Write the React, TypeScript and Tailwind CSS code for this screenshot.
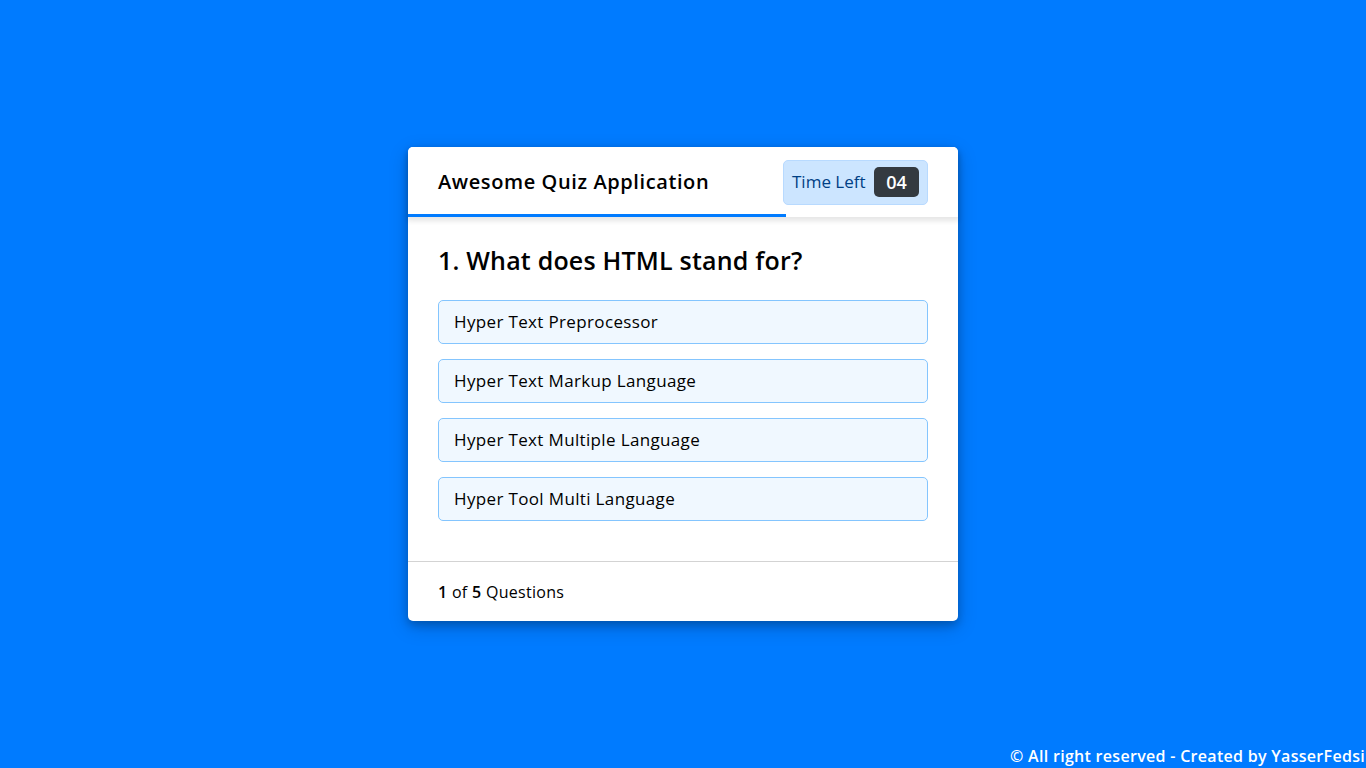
import { useState } from "react";

const questions = [
  {
    numb: 1,
    question: "What does HTML stand for?",
    options: [
      "Hyper Text Preprocessor",
      "Hyper Text Markup Language",
      "Hyper Text Multiple Language",
      "Hyper Tool Multi Language",
    ],
  },
];

const font = { fontFamily: '"Open Sans", "Liberation Sans", sans-serif' };

const App = () => {
  const [index] = useState(0);
  const q = questions[index];
  const timeLeft = 4;
  const total = 5;
  // progress of the time line under the header
  const lineWidth = 378;

  return (
    <div
      className="relative w-screen h-screen overflow-hidden bg-[#007bff] flex items-center justify-center"
      style={font}
    >
      <div className="w-[550px] bg-white rounded-[5px] shadow-[0_4px_8px_0_rgba(0,0,0,0.2),0_6px_20px_0_rgba(0,0,0,0.19)]">
        {/* header */}
        <header className="relative z-10 h-[70px] px-[30px] flex items-center justify-between rounded-t-[5px] bg-white shadow-[0_3px_5px_1px_rgba(0,0,0,0.1)]">
          <div className="text-[20px] font-semibold tracking-[0.6px] text-black">Awesome Quiz Application</div>
          <div className="flex items-center justify-between w-[145px] h-[45px] px-[8px] rounded-[5px] bg-[#cce5ff] border border-[#b8daff] text-[#004085]">
            <span className="text-[17px] font-normal">Time Left</span>
            <span className="w-[45px] h-[30px] leading-[30px] text-center text-[18px] font-semibold text-white bg-[#343a40] rounded-[5px]">
              {String(timeLeft).padStart(2, "0")}
            </span>
          </div>
          <div
            className="absolute left-0 bottom-0 h-[3px] bg-[#007bff]"
            style={{ width: lineWidth }}
          />
        </header>

        {/* question */}
        <section className="px-[30px] pt-[25px] pb-[40px]">
          <h2 className="text-[25px] leading-[37px] font-semibold tracking-[0.2px] text-black">
            {q.numb}. {q.question}
          </h2>
          <div className="mt-[21px] flex flex-col gap-[15px]">
            {q.options.map((opt) => (
              <div
                key={opt}
                className="h-[44px] flex items-center px-[15px] text-[17px] tracking-[0.35px] text-black bg-[#f0f8ff] border border-[#84c5fe] rounded-[5px] cursor-pointer"
              >
                {opt}
              </div>
            ))}
          </div>
        </section>

        {/* footer */}
        <footer className="h-[60px] px-[30px] flex items-center border-t border-[#d3d3d3]">
          <span className="text-[16px] tracking-[0.3px] text-black">
            <span className="font-semibold">{q.numb}</span> of{" "}
            <span className="font-semibold">{total}</span> Questions
          </span>
        </footer>
      </div>

      <div className="absolute bottom-0 left-[1010px] whitespace-nowrap text-white text-[16px] leading-[24px] font-semibold tracking-[0.3px]">
        © All right reserved - Created by YasserFedsi
      </div>
    </div>
  );
};

export default App;
